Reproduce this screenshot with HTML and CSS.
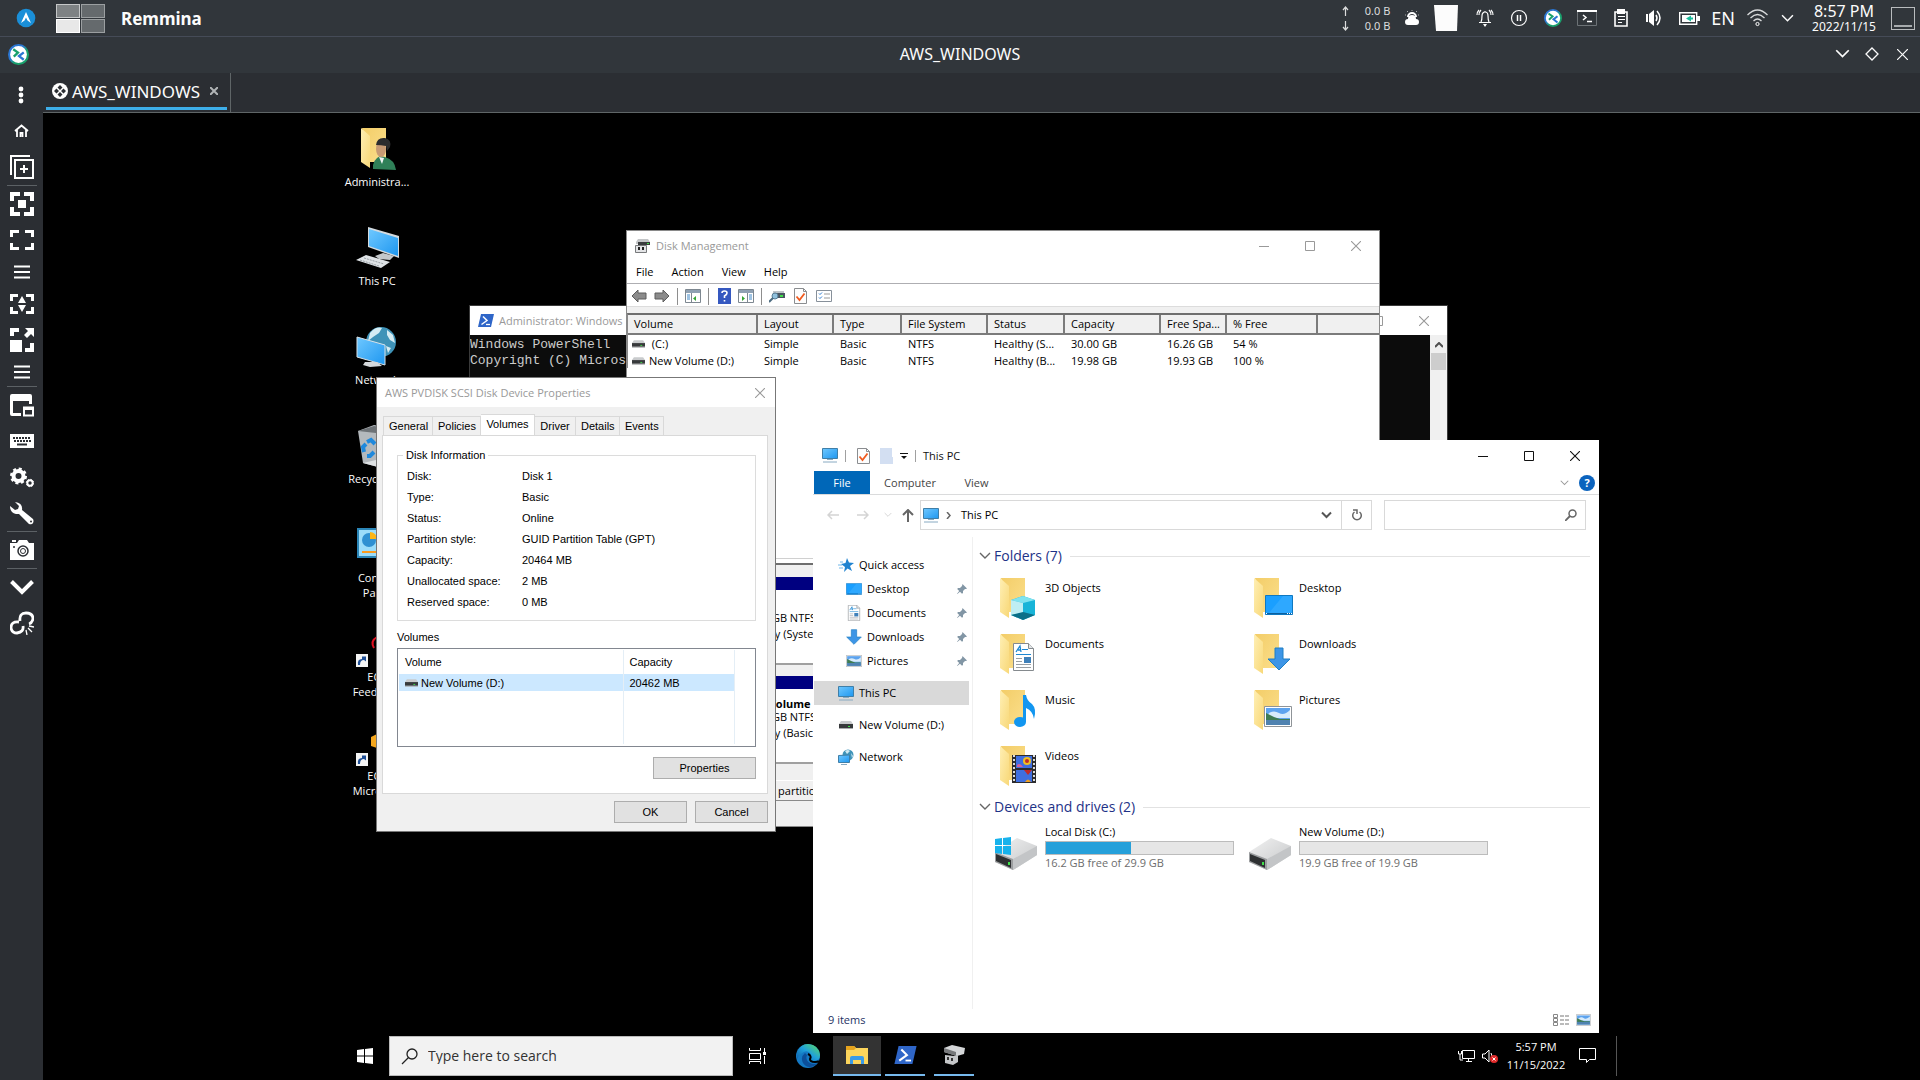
FILE: index.html
```html
<!DOCTYPE html>
<html lang="en">
<head>
<meta charset="utf-8">
<title>AWS_WINDOWS - Remmina</title>
<link rel="stylesheet" href="styles.css">
</head>
<body>
<svg class="defs" width="0" height="0" aria-hidden="true">
  <defs>
    <linearGradient id="g-fold" x1="0" y1="0" x2="1" y2="1"><stop offset="0" stop-color="#f3cd68"/><stop offset="1" stop-color="#fbdf8c"/></linearGradient>
    <linearGradient id="g-flap" x1="0" y1="0" x2="1" y2="1"><stop offset="0" stop-color="#ffefb4"/><stop offset="1" stop-color="#f8d878"/></linearGradient>
    <linearGradient id="g-scr" x1="0" y1="0" x2="1" y2="1"><stop offset="0" stop-color="#6fc8ff"/><stop offset="1" stop-color="#1e97f0"/></linearGradient>
    <linearGradient id="g-drv" x1="0" y1="0" x2="1" y2="1"><stop offset="0" stop-color="#f2f2f2"/><stop offset="1" stop-color="#c4c6c8"/></linearGradient>
    <linearGradient id="g-edge" x1="0" y1="1" x2="1" y2="0"><stop offset="0" stop-color="#0c59a4"/><stop offset=".5" stop-color="#1fa0dc"/><stop offset="1" stop-color="#5fe05a"/></linearGradient>
    <linearGradient id="g-rem" x1="0" y1="0" x2="1" y2="1"><stop offset=".4" stop-color="#2a76d2"/><stop offset=".6" stop-color="#18a06c"/></linearGradient>
  </defs>
  <symbol id="folder" viewBox="0 0 25 41"><path d="M1 0h24v34H8z" fill="url(#g-fold)"/><path d="M0 0l9 8v32L0 34z" fill="url(#g-flap)"/></symbol>
  <symbol id="pc" viewBox="0 0 16 15"><path d="M.5.5h15v10H.5z" fill="url(#g-scr)" stroke="#3f7fa8"/><path d="M5 11.500h6M1 14h14" stroke="#88aac2"/></symbol>
  <symbol id="drive-s" viewBox="0 0 14 8"><path d="M2 0h10l2 3H0z" fill="#c9cbcd"/><path d="M0 3h14v4H0z" fill="#37393b"/><path d="M0 7h14v1H0z" fill="#a9abad"/><path d="M9 5h2v1H9z" fill="#3fe04a"/></symbol>
  <symbol id="drive" viewBox="0 0 42 33"><path d="M0 15L22 1l20 8v9L18 33 0 25z" fill="url(#g-drv)"/><path d="M0 15l18 7v11L0 25z" fill="#9c9ea0"/><path d="M18 22L42 9v9L18 33z" fill="#c3c5c7"/><path d="M1 17l15 6v8L1 24z" fill="#2e3032"/><path d="M13 25h2v3h-2z" fill="#3fe04a"/></symbol>
  <symbol id="ps" viewBox="0 0 16 13"><path d="M3 0h13l-3 13H0z" fill="#2f66c8"/><path d="M5 2.500l4 4-5.500 4" fill="none" stroke="#fff" stroke-width="1.500"/><path d="M8 10.500h4" stroke="#fff" stroke-width="1.300"/></symbol>
  <symbol id="check" viewBox="0 0 13 16"><path d="M.5.5h9l3 3v12H.5z" fill="#fdfdfd" stroke="#8a8d90"/><path d="M9.500.5v3h3" fill="none" stroke="#8a8d90"/><path d="M2.500 8.500l3 3.500 5-6.500" fill="none" stroke="#f05a1e" stroke-width="1.800"/></symbol>
  <symbol id="pin" viewBox="0 0 10 10"><path d="M5.500 0L10 4.500l-1 .5-1 0-2 2 0 2-1 .8-2-2L.3 10 0 9.700 2.200 7 .2 5 1 4h2l2-2z" fill="#8296a5"/></symbol>
  <symbol id="rem" viewBox="0 0 20 20"><circle cx="10" cy="10" r="9" fill="#fff" stroke="url(#g-rem)" stroke-width="2"/><path d="M5 5l4.500 3.200L5.500 12" fill="none" stroke="#18a06c" stroke-width="2.200"/><path d="M15 8l-4.500 3.500L15 15" fill="none" stroke="#2a76d2" stroke-width="2.200"/></symbol>
  <symbol id="min" viewBox="0 0 10 10"><path d="M0 5.500h10" stroke="currentColor"/></symbol>
  <symbol id="max" viewBox="0 0 10 10"><path d="M.5.5h9v9h-9z" fill="none" stroke="currentColor"/></symbol>
  <symbol id="close" viewBox="0 0 10 10"><path d="M0 0l10 10M10 0L0 10" stroke="currentColor" stroke-width="1.100"/></symbol>
  <symbol id="chev" viewBox="0 0 12 8"><path d="M1 1l5 5 5-5" fill="none" stroke="currentColor" stroke-width="1.400"/></symbol>
  <symbol id="photo" viewBox="0 0 28 21"><path d="M.5.5h27v20H.5z" fill="#fff" stroke="#8f9498"/><path d="M2 2h24v17H2z" fill="#5da3ee"/><path d="M5 7q5-3 10 0t11-3v8H2z" fill="#d7ebfb"/><path d="M2 7l8 4 6 2h10v1H2z" fill="#3f7c52"/><path d="M2 14h24v5H2z" fill="#4f82b0"/></symbol>
  <symbol id="doc" viewBox="0 0 21 28"><path d="M.5.5h15l5 5v22H.5z" fill="#fff" stroke="#858a8e"/><path d="M15.500.5v5h5" fill="#e3e6e8" stroke="#858a8e"/><path d="M3 9l4-6 1 6M5 7h3" fill="none" stroke="#1d87d2" stroke-width="1.300"/><path d="M9 6.500h6M3 11.500h15" stroke="#1d87d2"/><path d="M3 15.500h6M3 18.500h6M3 21.500h15M3 24.500h15" stroke="#9a9fa3"/><path d="M11 14h7v6h-7z" fill="#3f80b9"/></symbol>
  <symbol id="down" viewBox="0 0 24 24"><path d="M8 1h8v11h7L12 23 1 12h7z" fill="#3d95e6" stroke="#1f7fc4"/></symbol>
  <symbol id="screen" viewBox="0 0 28 20"><path d="M.5.5h27v19H.5z" fill="#1a9fff" stroke="#0f78c0"/><path d="M18 1h9v17H4z" fill="#37acff" opacity=".7"/><path d="M1 18.500h26" stroke="#0b5f9e"/><path d="M22 18.500h5M1 18.500h1" stroke="#fff" stroke-dasharray="1 1"/></symbol>
  <symbol id="globe-pc" viewBox="0 0 42 42"><circle cx="25" cy="16" r="15" fill="#3f93b8"/><path d="M14 7q6-7 12-5l-3 5-6 4-5 4zM31 4l6 5 2 8-5-3-3-5zM30 20l5 2-3 5z" fill="#d5ecf3"/><path d="M1 11l28 8v20L1 31z" fill="url(#g-scr)" stroke="#d9e2e8"/><path d="M9 36l12 0 5 4-12 1-7-2z" fill="#d5d9dc"/></symbol>
  <symbol id="net-s" viewBox="0 0 16 16"><circle cx="10" cy="6" r="5.500" fill="#3f93b8"/><path d="M7 2q3-2 5 0L9 5zM13 4l2 3-1 2z" fill="#cfe8f1"/><path d="M.5 6.500L11.500 6v7.500H.5z" fill="url(#g-scr)" stroke="#3f7fa8"/><path d="M3 15.500h6" stroke="#88aac2"/></symbol>
  <symbol id="cap" viewBox="0 0 16 15"><path d="M3 1h10l2 3v2H1V4z" fill="#c3c5c7"/><path d="M3 4h12v3H3z" fill="#3a3c3e"/><path d="M.5 7.500h11v7H.5z" fill="#e3e4e6" stroke="#77797b"/><path d="M3 9h2v3H3zM7 9h2v3H7z" fill="#222"/><path d="M12 5h2v1h-2z" fill="#3fe04a"/></symbol>
  <symbol id="shortcut" viewBox="0 0 13 13"><path d="M0 0h13v13H0z" fill="#f4f4f4"/><path d="M3 11q-1-6 4-6V2.500h4v5L9 6q-4 0-4 5z" fill="#1f4f96"/></symbol>
</svg>

<header class="panel">
  <button class="bare logo" aria-label="Application launcher"><svg width="20" height="20" viewBox="0 0 20 20"><circle cx="10" cy="10" r="9.300" fill="#1a8fd8"/><path d="M10 4l5 11-3.500-2.500L10 9.500l-1.500 3L5 15z" fill="#fff"/></svg></button>
  <div class="pager"><span class="on1"></span><span></span><span class="current"></span><span></span></div>
  <strong class="app">Remmina</strong>
  <div class="tray">
    <div class="net"><svg width="7" height="10" viewBox="0 0 7 10"><path d="M3.500 10V1M1 4l2.500-3L6 4" fill="none" stroke="#dcdddd" stroke-width="1.200"/></svg><span>0.0 B</span><svg width="7" height="10" viewBox="0 0 7 10"><path d="M3.500 0v9M1 6l2.500 3L6 6" fill="none" stroke="#dcdddd" stroke-width="1.200"/></svg><span>0.0 B</span></div>
    <svg class="t1" width="14" height="16" viewBox="0 0 14 16"><path d="M3 15a3 3 0 0 1 0-6 4 4 0 0 1 8 0 3 3 0 0 1 0 6z" fill="#fff"/><path d="M3 7a4 4 0 0 1 8 0" fill="none" stroke="#fff" stroke-width="2"/><path d="M7 0v1M2 1l1 1M12 1l-1 1M0 5h1M13 5h1" stroke="#aaa"/></svg>
    <svg class="t2" width="24" height="26" viewBox="0 0 24 26"><path d="M0 0h24l-1 26H2z" fill="#fcfcfc"/></svg>
    <svg class="t3" width="18" height="18" viewBox="0 0 18 18"><path d="M3 13.500h12M5 13q1-2 1-6a3 4 0 0 1 6 0q0 4 1 6M9 2v1.500M3 1Q1 3 1 6M5 1Q3 3 3 6M15 1q2 2 2 5M13 1q2 2 2 5" fill="none" stroke="#fcfcfc" stroke-width="1.200"/><path d="M7 15h4l-2 3z" fill="#fff"/></svg>
    <svg class="t4" width="18" height="18" viewBox="0 0 18 18"><circle cx="9" cy="9" r="7.500" fill="none" stroke="#fcfcfc" stroke-width="1.200"/><path d="M7.500 6v6M10.500 6v6" stroke="#fff" stroke-width="1.500"/></svg>
    <svg class="t4" width="18" height="18"><use href="#rem"/></svg>
    <svg class="t5" width="20" height="16" viewBox="0 0 20 16"><path d="M0 0h20v2H0z" fill="#fff"/><path d="M.5 2v13.500h19V2" fill="none" stroke="#6c7276"/><path d="M6 5l3 2.500L6 10M10 11.500h5" fill="none" stroke="#fff" stroke-width="1.500"/></svg>
    <svg class="t6" width="14" height="18" viewBox="0 0 14 18"><path d="M1 3h12v14H1z" fill="none" stroke="#fff" stroke-width="1.600"/><path d="M3 0h8v5H3z" fill="#fff"/><path d="M4 7.500h7M4 10.500h7M4 13.500h4" stroke="#fff"/></svg>
    <svg class="t7" width="18" height="16" viewBox="0 0 18 16"><path d="M0 4h2v8H0zM3 4l5-4v16l-5-4z" fill="#fff"/><path d="M10 5q2 3 0 6M11 1q6 7 0 14" fill="none" stroke="#fff" stroke-width="1.500"/></svg>
    <svg class="t8" width="21" height="13" viewBox="0 0 21 13"><path d="M.7.7h17v11.500H.7z" fill="none" stroke="#fff" stroke-width="1.400"/><path d="M3 3h13v7H3z" fill="#fff"/><path d="M18 4h3v5h-3z" fill="#fff"/><path d="M7 6.500l5-3v6zM11 5.500h3v2h-3z" fill="#1abc9c"/></svg>
    <span class="lang">EN</span>
    <svg class="t9" width="21" height="18" viewBox="0 0 21 18"><path d="M.5 6q10-10 20 0M3.500 9q7-7 14 0M6.500 12q4-4 8 0" fill="none" stroke="#d8dadb" stroke-width="1.300"/><circle cx="10.500" cy="15" r="1.600" fill="none" stroke="#fff"/></svg>
    <svg class="t10" width="13" height="9"><use href="#chev"/></svg>
    <div class="clock"><span>8:57 PM</span><small>2022/11/15</small></div>
    <button class="bare peek" aria-label="Show desktop"><span></span></button>
  </div>
</header>

<div class="titlebar">
  <svg width="21" height="21"><use href="#rem"/></svg>
  <h1>AWS_WINDOWS</h1>
  <div class="wm">
    <button class="bare" aria-label="Minimize"><svg width="15" height="10"><use href="#chev"/></svg></button>
    <button class="bare" aria-label="Maximize"><svg width="14" height="14" viewBox="0 0 14 14"><path d="M7 1l6 6-6 6-6-6z" fill="none" stroke="currentColor" stroke-width="1.300"/></svg></button>
    <button class="bare" aria-label="Close"><svg width="11" height="11"><use href="#close"/></svg></button>
  </div>
</div>

<div class="client">
  <nav class="tools" aria-label="Connection tools">
    <button class="bare" aria-label="Menu"><svg width="24" height="24" viewBox="0 0 24 24"><g fill="#fff"><circle cx="11" cy="6" r="2.400"/><circle cx="11" cy="12" r="2.400"/><circle cx="11" cy="18" r="2.400"/></g></svg></button>
    <button class="bare" aria-label="Home"><svg width="24" height="24" viewBox="0 0 24 24"><path d="M5 12l6.500-5.500L18 12M7 11v7M16 11v7M10.500 18v-4h2v4" fill="none" stroke="#fff" stroke-width="1.800"/></svg></button>
    <button class="bare" aria-label="New connection"><svg width="24" height="24" viewBox="0 0 24 24"><path d="M1 20V1h19M5 5h18v18H5zM14 10v8M10 14h8" fill="none" stroke="#fff" stroke-width="2"/></svg></button>
    <hr>
    <button class="bare" aria-label="Fit window"><svg width="24" height="24" viewBox="0 0 24 24"><path d="M2 9V2h8M14 2h8v7M22 15v7h-8M10 22H2v-7" fill="none" stroke="#fff" stroke-width="4"/><path d="M8 8h8v8H8z" fill="#fff"/></svg></button>
    <button class="bare" aria-label="Full screen"><svg width="24" height="24" viewBox="0 0 24 24"><path d="M1.500 9V3.500H9M15 3.500h7.500V9M22.500 15v5.500H15M9 20.500H1.500V15" fill="none" stroke="#fff" stroke-width="3"/></svg></button>
    <button class="bare low" aria-label="Full screen options"><svg width="16" height="14" viewBox="0 0 16 14"><path d="M0 1.500h16M0 7h16M0 12.500h16" stroke="#fff" stroke-width="2"/></svg></button>
    <button class="bare" aria-label="Dynamic resolution"><svg width="24" height="24" viewBox="0 0 24 24"><path d="M1.500 9V3.500H8M16 3.500h6.500V9M22.500 15v5.500H16M8 20.500H1.500V15" fill="none" stroke="#fff" stroke-width="3"/><path d="M12 4l4 7H8zM12 20l4-7H8z" fill="#fff"/></svg></button>
    <button class="bare" aria-label="Scaled mode"><svg width="24" height="24" viewBox="0 0 24 24"><path d="M2 8V2h7M22 15v7h-7" fill="none" stroke="#fff" stroke-width="4"/><path d="M0 12h12v12H0zM15 0h9v9l-3-3-4 4-3-3 4-4z" fill="#fff"/></svg></button>
    <button class="bare low" aria-label="Scale options"><svg width="16" height="14" viewBox="0 0 16 14"><path d="M0 1.500h16M0 7h16M0 12.500h16" stroke="#fff" stroke-width="2"/></svg></button>
    <hr>
    <button class="bare" aria-label="Multi monitor"><svg width="24" height="24" viewBox="0 0 24 24"><path d="M0 3q0-2 2-2h18q2 0 2 2v8h-3V8H3v12h8v3H2q-2 0-2-2z" fill="#fff"/><path d="M14 14.500h9v8h-9z" fill="none" stroke="#fff" stroke-width="2"/><path d="M14 14h9v3h-9z" fill="#fff"/></svg></button>
    <button class="bare" aria-label="Grab keyboard"><svg width="24" height="24" viewBox="0 0 24 24"><path d="M0 5h24v14H0z" fill="#fff"/><path d="M3 9h18M4 12h17" stroke="#2b2e33" stroke-width="2" stroke-dasharray="2 1"/><path d="M7 15.500h10" stroke="#2b2e33" stroke-width="2"/></svg></button>
    <button class="bare" aria-label="Preferences"><svg width="24" height="24" viewBox="0 0 24 24"><circle cx="8.500" cy="11" r="5" fill="none" stroke="#fff" stroke-width="4"/><circle cx="8.500" cy="11" r="7.300" fill="none" stroke="#fff" stroke-width="2.400" stroke-dasharray="3 2.730"/><circle cx="20" cy="18" r="2.700" fill="none" stroke="#fff" stroke-width="2"/><circle cx="20" cy="18" r="3.700" fill="none" stroke="#fff" stroke-dasharray="1.500 1.400"/></svg></button>
    <button class="bare" aria-label="Tools"><svg width="24" height="24" viewBox="0 0 24 24"><path d="M5 1l4 4-1 3-3 1-5-4q0 7 6 8l3 0 10 10q3 1 4-1t0-4L12 9q1-7-7-8z" fill="#fff"/><circle cx="21" cy="20.500" r="1" fill="#2b2e33"/></svg></button>
    <hr>
    <button class="bare" aria-label="Screenshot"><svg width="24" height="24" viewBox="0 0 24 24"><path d="M0 5h7l2-3h8l2 3h5v17H0zM2 2h4v2H2z" fill="#fff"/><circle cx="13" cy="13" r="5" fill="none" stroke="#2b2e33" stroke-width="1.500"/><circle cx="13" cy="13" r="2.500" fill="none" stroke="#2b2e33"/><circle cx="4" cy="9" r="1" fill="#2b2e33"/></svg></button>
    <hr>
    <button class="bare" aria-label="Minimize window"><svg width="24" height="24" viewBox="0 0 24 24"><path d="M1.500 6.500L12 17 22.500 6.500" fill="none" stroke="#fff" stroke-width="4"/></svg></button>
    <button class="bare" aria-label="Disconnect"><svg width="24" height="24" viewBox="0 0 24 24"><path d="M10 10q-1-8 6-8 7 0 7 6-1 4-4 5M9 11q-8-1-8 6 1 5 6 5 7-1 6-7" fill="none" stroke="#fff" stroke-width="2.800"/><path d="M16 19l1 5M18 17l4 4M19 15l5 1" stroke="#fff" stroke-width="1.300"/></svg></button>
  </nav>

  <div class="session">
    <div class="tabs">
      <button class="bare tab"><svg width="16" height="16" viewBox="0 0 16 16"><circle cx="8" cy="8" r="8" fill="#fff"/><path d="M8 2l2.500 2.500L8 7 5.500 4.500zM8 9l2.500 2.500L8 14l-2.500-2.500zM2 8l2.500-2.500L7 8l-2.500 2.500zM9 8l2.500-2.500L14 8l-2.500 2.500z" fill="#2b2e33"/></svg><span>AWS_WINDOWS</span><svg class="x" width="8" height="8" viewBox="0 0 8 8"><path d="M0 0l8 8M8 0L0 8" stroke="currentColor" stroke-width="2"/></svg></button>
    </div>
    <main class="stage">
      <div class="remote">
        <ul class="shortcuts">
          <li><svg width="42" height="44" viewBox="0 0 42 44"><use href="#folder" x="5" y="0" width="25" height="41"/><path d="M17 41q-1-9 7-13l5 1q10 3 11 13z" fill="#2f8058"/><path d="M23 29l3 7 2-6z" fill="#eef4f4"/><ellipse cx="25" cy="21" rx="5" ry="8" fill="#c79a74"/><path d="M20 17q1-8 9-7 7 2 5 9l-3 4-1-5q-5-1-10-1z" fill="#2c2c2e"/></svg><span>Administra...</span></li>
          <li><svg width="44" height="44" viewBox="0 0 44 44"><path d="M13 0l31 9v22L13 20z" fill="#d4dade"/><path d="M14 2l29 9v18L14 19z" fill="url(#g-scr)"/><path d="M20 29l8-3 11 3-4 4-11-1z" fill="#c4c8cb"/><path d="M1 33l10-5 24 7-9 6z" fill="#dfe3e6"/><path d="M5 33l19 6M9 31l20 6" stroke="#9aa1a6" stroke-dasharray="2 1"/></svg><span>This PC</span></li>
          <li><svg width="42" height="44"><use href="#globe-pc" width="42" height="42"/></svg><span>Network</span></li>
          <li><svg width="38" height="44" viewBox="0 0 38 44"><path d="M0 6L16 0l22 4-4 38-14 0-15-4z" fill="#b4b9bd"/><path d="M0 6L16 1l22 3-20 4z" fill="#6d7276"/><path d="M18 35l16 4-14 3-15-4z" fill="#dfe2e4"/><path d="M9 17l4-2 4 4M16 27l-4 4h-3M6 27l-1-5 3-3" fill="none" stroke="#2089dc" stroke-width="4"/></svg><span>Recycle Bin</span></li>
          <li><svg width="40" height="44" viewBox="0 0 40 44"><path d="M1 5h38v28H1z" fill="#9bdcfa" stroke="#2b86b8" stroke-width="2"/><circle cx="12" cy="16" r="7" fill="#2f90d2"/><path d="M13 15V8a7 7 0 0 1 7 7z" fill="#fdb515"/><path d="M5 28h16" stroke="#fb9a1c" stroke-width="2"/></svg><span>Control Panel</span></li>
          <li><svg width="42" height="44" viewBox="0 0 42 44"><path d="M21 14q-7 4-3 11" fill="none" stroke="#e01020" stroke-width="2"/><use href="#shortcut" x="-1" y="31" width="13" height="13"/></svg><span>EC2 Feedback</span></li>
          <li><svg width="42" height="44" viewBox="0 0 42 44"><path d="M15 15l8-4 8 3v12l-10 0-6-2z" fill="#f5a71e"/><use href="#shortcut" x="-1" y="31" width="13" height="13"/></svg><span>EC2 Microsoft</span></li>
        </ul>

        <section class="win ps" aria-label="Windows PowerShell">
          <div class="bar"><svg width="16" height="13"><use href="#ps"/></svg><span>Administrator: Windows</span>
            <div class="ctl"><button class="bare" aria-label="Minimize"><svg width="10" height="10"><use href="#min"/></svg></button><button class="bare" aria-label="Maximize"><svg width="10" height="10"><use href="#max"/></svg></button><button class="bare" aria-label="Close"><svg width="10" height="10"><use href="#close"/></svg></button></div>
          </div>
          <div class="console"><pre>Windows PowerShell
Copyright (C) Micros</pre><div class="scroll"><svg width="8" height="6" viewBox="0 0 8 6"><path d="M0 5l4-4 4 4" fill="none" stroke="#505050" stroke-width="2"/></svg><i></i></div></div>
        </section>

        <section class="win disk" aria-label="Disk Management">
          <div class="bar"><svg width="16" height="15"><use href="#cap"/></svg><span>Disk Management</span>
            <div class="ctl"><button class="bare" aria-label="Minimize"><svg width="10" height="10"><use href="#min"/></svg></button><button class="bare" aria-label="Maximize"><svg width="10" height="10"><use href="#max"/></svg></button><button class="bare" aria-label="Close"><svg width="10" height="10"><use href="#close"/></svg></button></div>
          </div>
          <div class="menu"><button class="bare">File</button><button class="bare">Action</button><button class="bare">View</button><button class="bare">Help</button></div>
          <div class="icons">
            <button class="bare" aria-label="Back"><svg width="16" height="14" viewBox="0 0 16 14"><path d="M1 7l6-6v3h8v6H7v3z" fill="#8b8b8b" stroke="#5c5c5c"/></svg></button>
            <button class="bare" aria-label="Forward"><svg width="16" height="14" viewBox="0 0 16 14"><path d="M15 7L9 1v3H1v6h8v3z" fill="#8b8b8b" stroke="#5c5c5c"/></svg></button>
            <i></i>
            <button class="bare" aria-label="Show console tree"><svg width="16" height="14" viewBox="0 0 16 14"><path d="M.5.5h15v13H.5z" fill="#fff" stroke="#7d8790"/><path d="M1 1h14v3H1z" fill="#8fa1b3"/><path d="M6.500 4v9" stroke="#7d8790"/><path d="M2 6h3M2 8h3M2 10h3" stroke="#3f88c8"/><path d="M11 7v5L8 9.500z" fill="#35a535"/></svg></button>
            <i></i>
            <button class="bare" aria-label="Help"><svg width="13" height="16" viewBox="0 0 13 16"><path d="M0 0h13v16H0z" fill="#3558c0"/><path d="M4 5q0-2 2.500-2T9 5q0 1.500-2.500 3v2M6.500 12v1.500" fill="none" stroke="#fff" stroke-width="1.600"/></svg></button>
            <button class="bare" aria-label="Show action pane"><svg width="16" height="14" viewBox="0 0 16 14"><path d="M.5.5h15v13H.5z" fill="#fff" stroke="#7d8790"/><path d="M1 1h14v3H1z" fill="#8fa1b3"/><path d="M9.500 4v9" stroke="#7d8790"/><path d="M11 6h3M11 8h3M11 10h3" stroke="#3f88c8"/><path d="M4 7v5l3-2.500z" fill="#35a535"/></svg></button>
            <i></i>
            <button class="bare" aria-label="Rescan disks"><svg width="16" height="14" viewBox="0 0 16 14"><path d="M4 2h11v2H4z" fill="#bfc4c8"/><path d="M4 4h12v5H4z" fill="#4a5560"/><path d="M11 6h3v2h-3z" fill="#3fe04a"/><circle cx="6" cy="7" r="3" fill="#8fc0dc" stroke="#587d94"/><path d="M4 9l-4 4" stroke="#4c6b80" stroke-width="2"/></svg></button>
            <button class="bare" aria-label="Properties"><svg width="13" height="16"><use href="#check"/></svg></button>
            <button class="bare" aria-label="List view"><svg width="16" height="12" viewBox="0 0 16 12"><path d="M.5.5h15v11H.5z" fill="#fff" stroke="#87909a"/><path d="M3 3.500l1 1 2-2M3 7.500l1 1 2-2" fill="none" stroke="#2a7ad2"/><path d="M8 4h6M8 8h6" stroke="#999"/></svg></button>
          </div>
          <table class="vols">
            <colgroup><col class="c1"><col class="c2"><col class="c3"><col class="c4"><col class="c5"><col class="c6"><col class="c7"><col class="c8"><col></colgroup>
            <thead><tr><th>Volume</th><th>Layout</th><th>Type</th><th>File System</th><th>Status</th><th>Capacity</th><th>Free Spa...</th><th>% Free</th><th></th></tr></thead>
            <tbody>
              <tr><td><svg width="13" height="8"><use href="#drive-s"/></svg>&nbsp;(C:)</td><td>Simple</td><td>Basic</td><td>NTFS</td><td>Healthy (S...</td><td>30.00 GB</td><td>16.26 GB</td><td>54 %</td><td></td></tr>
              <tr><td><svg width="13" height="8"><use href="#drive-s"/></svg>New Volume (D:)</td><td>Simple</td><td>Basic</td><td>NTFS</td><td>Healthy (B...</td><td>19.98 GB</td><td>19.93 GB</td><td>100 %</td><td></td></tr>
            </tbody>
          </table>
          <div class="graph">
            <div class="lane"><div><b></b><span>30.00 GB NTFS</span><span>Healthy (System)</span></div></div>
            <div class="lane"><div><b>New Volume (D:)</b><span>19.98 GB NTFS</span><span>Healthy (Basic)</span></div></div>
            <p class="legend">Primary partition</p>
          </div>
        </section>

        <section class="win props" aria-label="Disk Device Properties">
          <div class="bar"><span>AWS PVDISK SCSI Disk Device Properties</span><button class="bare" aria-label="Close"><svg width="10" height="10"><use href="#close"/></svg></button></div>
          <div class="body">
            <div class="ptabs"><button>General</button><button>Policies</button><button class="on">Volumes</button><button>Driver</button><button>Details</button><button>Events</button></div>
            <div class="page">
              <fieldset><legend>Disk Information</legend>
                <dl><dt>Disk:</dt><dd>Disk 1</dd><dt>Type:</dt><dd>Basic</dd><dt>Status:</dt><dd>Online</dd><dt>Partition style:</dt><dd>GUID Partition Table (GPT)</dd><dt>Capacity:</dt><dd>20464 MB</dd><dt>Unallocated space:</dt><dd>2 MB</dd><dt>Reserved space:</dt><dd>0 MB</dd></dl>
              </fieldset>
              <p class="cap">Volumes</p>
              <div class="list"><table>
                <thead><tr><th>Volume</th><th>Capacity</th></tr></thead>
                <tbody><tr><td><svg width="13" height="8"><use href="#drive-s"/></svg>New Volume (D:)</td><td>20462 MB</td></tr><tr class="rest"><td></td><td></td></tr></tbody>
              </table></div>
              <div class="act"><button class="push wide">Properties</button></div>
            </div>
            <div class="foot"><button class="push">OK</button><button class="push">Cancel</button></div>
          </div>
        </section>

        <section class="win explorer" aria-label="This PC">
          <div class="bar">
            <svg width="16" height="15"><use href="#pc"/></svg><i></i><svg class="q1" width="13" height="16"><use href="#check"/></svg><svg class="q2" width="13" height="16" viewBox="0 0 13 16"><path d="M0 0h12v9h1v7H0z" fill="#d3dff2"/></svg><svg class="q3" width="8" height="6" viewBox="0 0 8 6"><path d="M0 .5h8" stroke="#111"/><path d="M1 3h6L4 6z" fill="#111"/></svg><i></i><span>This PC</span>
            <div class="ctl"><button class="bare" aria-label="Minimize"><svg width="10" height="10"><use href="#min"/></svg></button><button class="bare" aria-label="Maximize"><svg width="10" height="10"><use href="#max"/></svg></button><button class="bare" aria-label="Close"><svg width="10" height="10"><use href="#close"/></svg></button></div>
          </div>
          <div class="ribbon"><button class="bare file">File</button><button class="bare">Computer</button><button class="bare">View</button><svg class="fold" width="9" height="6"><use href="#chev"/></svg><button class="bare help" aria-label="Help">?</button></div>
          <div class="address">
            <button class="bare dim" aria-label="Back"><svg width="12" height="10" viewBox="0 0 12 10"><path d="M12 5H1M5 1L1 5l4 4" fill="none" stroke="currentColor" stroke-width="1.500"/></svg></button>
            <button class="bare dim" aria-label="Forward"><svg width="12" height="10" viewBox="0 0 12 10"><path d="M0 5h11M7 1l4 4-4 4" fill="none" stroke="currentColor" stroke-width="1.500"/></svg></button>
            <button class="bare dim thin" aria-label="Recent"><svg width="8" height="6"><use href="#chev"/></svg></button>
            <button class="bare up" aria-label="Up"><svg width="12" height="13" viewBox="0 0 12 13"><path d="M6 13V1M1 6l5-5 5 5" fill="none" stroke="currentColor" stroke-width="2"/></svg></button>
            <div class="path"><svg width="16" height="15"><use href="#pc"/></svg><svg class="gt" width="5" height="7" viewBox="0 0 5 7"><path d="M1 0l3 3.500L1 7" fill="none" stroke="#666" stroke-width="1.500"/></svg><span>This PC</span><button class="bare drop" aria-label="History"><svg width="11" height="8" viewBox="0 0 11 8"><path d="M1 1.500l4.500 4.500L10 1.500" fill="none" stroke="currentColor" stroke-width="2"/></svg></button><button class="bare ref" aria-label="Refresh"><svg width="12" height="12" viewBox="0 0 12 12"><path d="M8.500 3a4.300 4.300 0 1 1-5 0M2 1h4v4" fill="none" stroke="#666" stroke-width="1.500"/></svg></button></div>
            <label class="find"><input type="text" aria-label="Search This PC"><svg width="12" height="12" viewBox="0 0 12 12"><circle cx="7.500" cy="4.500" r="3.500" fill="none" stroke="#666" stroke-width="1.500"/><path d="M5 7l-5 5" stroke="#666" stroke-width="1.800"/></svg></label>
          </div>
          <div class="split">
            <nav class="tree">
              <a href="#"><svg class="i16" width="16" height="14" viewBox="0 0 16 14"><path d="M9 0l2 4.500 5 .5-4 3 2 5-4.500-2.500L6 14l1-5-4-3 4.500-1z" fill="#2083d0"/><path d="M0 7h4M1 10h4M2 4h3" stroke="#70b8ea"/></svg>Quick access</a>
              <a href="#" class="sub"><svg class="i16" width="16" height="12"><use href="#screen"/></svg>Desktop<svg class="pin" width="10" height="10"><use href="#pin"/></svg></a>
              <a href="#" class="sub"><svg class="i16" width="16" height="16"><use href="#doc"/></svg>Documents<svg class="pin" width="10" height="10"><use href="#pin"/></svg></a>
              <a href="#" class="sub"><svg class="i16" width="16" height="16"><use href="#down"/></svg>Downloads<svg class="pin" width="10" height="10"><use href="#pin"/></svg></a>
              <a href="#" class="sub"><svg class="i16" width="16" height="12"><use href="#photo"/></svg>Pictures<svg class="pin" width="10" height="10"><use href="#pin"/></svg></a>
              <a href="#" class="top on"><svg class="i16" width="16" height="15"><use href="#pc"/></svg>This PC</a>
              <a href="#" class="top"><svg class="i16" width="16" height="8"><use href="#drive-s"/></svg>New Volume (D:)</a>
              <a href="#" class="top"><svg class="i16" width="16" height="16"><use href="#net-s"/></svg>Network</a>
            </nav>
            <div class="content">
              <h2><svg width="12" height="8"><use href="#chev"/></svg>Folders (7)</h2>
              <ul class="grid">
                <li><svg width="50" height="42" viewBox="0 0 50 42"><use href="#folder" x="5" width="25" height="41"/><path d="M16 22l12-4 12 4v15l-12 5-12-5z" fill="#18b4d8"/><path d="M16 22l12-4 12 4-12 3z" fill="#7fe3ef"/><path d="M16 22l12 3v10l-12 2z" fill="#bfeef3"/><path d="M16 37l12-3 12 3-12 5z" fill="#0b6f88"/></svg><span>3D Objects</span></li>
                <li><svg width="50" height="42"><use href="#folder" x="5" width="25" height="41"/><use href="#screen" x="16" y="17" width="28" height="20"/></svg><span>Desktop</span></li>
                <li><svg width="50" height="42"><use href="#folder" x="5" width="25" height="41"/><use href="#doc" x="18" y="9" width="21" height="28"/></svg><span>Documents</span></li>
                <li><svg width="50" height="42"><use href="#folder" x="5" width="25" height="41"/><use href="#down" x="18" y="13" width="24" height="24"/></svg><span>Downloads</span></li>
                <li><svg width="50" height="42"><use href="#folder" x="5" width="25" height="41"/><ellipse cx="25" cy="32" rx="6" ry="5" fill="#1296f0"/><path d="M28 5h3q1 6 6 9 5 5 2 15-1-8-8-11v14h-3z" fill="#1296f0"/></svg><span>Music</span></li>
                <li><svg width="50" height="42"><use href="#folder" x="5" width="25" height="41"/><use href="#photo" x="15" y="16" width="28" height="21"/></svg><span>Pictures</span></li>
                <li><svg width="50" height="42"><use href="#folder" x="5" width="25" height="41"/><path d="M17 9h24v28H17z" fill="#2c2c2e"/><path d="M19 9v28M39 9v28" stroke="#ddd" stroke-width="2" stroke-dasharray="2 2"/><path d="M21 10h16v12H21zM21 24h16v12H21z" fill="#3f6fe0"/><circle cx="32" cy="15" r="4" fill="#f0c020"/><circle cx="32" cy="15" r="2" fill="#c02a2a"/><path d="M22 19q3-3 6 2h-6z" fill="#d060a0"/><path d="M29 24h8l-4 5z" fill="#c02a2a"/><path d="M30 36q3-5 6 0z" fill="#f0a020"/></svg><span>Videos</span></li>
              </ul>
              <h2 class="second"><svg width="12" height="8"><use href="#chev"/></svg>Devices and drives (2)</h2>
              <ul class="grid dev">
                <li><svg width="50" height="48" viewBox="0 0 50 48"><use href="#drive" y="13" width="42" height="33"/><path d="M0 15l7-1v7H0zM8 14l8-1v8H8zM0 22h7v8l-7-1zM8 22h8v9l-8-1z" fill="#17b2ec"/></svg><div><label for="c">Local Disk (C:)</label><progress id="c" max="189" value="86"></progress><small>16.2 GB free of 29.9 GB</small></div></li>
                <li><svg width="50" height="48" viewBox="0 0 50 48"><use href="#drive" y="13" width="42" height="33"/></svg><div><label for="d">New Volume (D:)</label><progress id="d" max="189" value="0"></progress><small>19.9 GB free of 19.9 GB</small></div></li>
              </ul>
            </div>
          </div>
          <footer><span>9 items</span><button class="bare" aria-label="Details view"><svg width="16" height="12" viewBox="0 0 16 12"><path d="M.5.5h4v3h-4zM.5 4.500h4v3h-4zM.5 8.500h4v3h-4z" fill="none" stroke="#888"/><path d="M7 2h9M7 6h9M7 10h9" stroke="#777" stroke-dasharray="4 1"/></svg></button><button class="bare" aria-label="Large icons"><svg width="15" height="12"><use href="#photo"/></svg></button></footer>
        </section>

        <footer class="taskbar">
          <button class="bare start" aria-label="Start"><svg width="16" height="16" viewBox="0 0 16 16"><path d="M0 2l7-1v6.500H0zM8 1l8-1v7.500H8zM0 8.500h7V15l-7-1zM8 8.500h8V16l-8-1z" fill="#fff"/></svg></button>
          <label class="search"><svg width="17" height="17" viewBox="0 0 17 17"><circle cx="11" cy="6" r="5" fill="none" stroke="#222" stroke-width="1.300"/><path d="M7.500 9.500L1 16" stroke="#222" stroke-width="1.300"/></svg><input type="text" placeholder="Type here to search" aria-label="Search"></label>
          <button class="bare tv" aria-label="Task view"><svg width="17" height="16" viewBox="0 0 17 16"><path d="M.5 0v2.500h11V0M.5 5.500h11v6H.5zM.5 16v-2.500h11V16M15.500 0v4M15.500 8v8" fill="none" stroke="#fff"/><path d="M14 4h3v3h-3z" fill="#fff"/></svg></button>
          <button class="bare edge" aria-label="Edge"><svg width="24" height="24" viewBox="0 0 24 24"><circle cx="12" cy="12" r="12" fill="#1479c4"/><path d="M1 9Q4 0 12 0q11 1 12 11 0 6-7 6-4-1-3-3 2-2 0-5-4-4-9 1-3 2-4 5z" fill="url(#g-edge)"/><path d="M9 9q-5 4-2 10 4 6 11 3l4-3q-4 2-8 0-5-3-3-8z" fill="#0c4f9a"/><path d="M12 10q4 2 2 5 0 3 5 3 3 0 4-1" fill="none" stroke="#000" stroke-width="2"/></svg></button>
          <button class="bare run active" aria-label="File Explorer"><svg width="22" height="18" viewBox="0 0 22 18"><path d="M0 0h8l2 2h12v16H0z" fill="#fcd55c"/><path d="M0 0h8l2 2-2 2H0z" fill="#e6a41e"/><path d="M4 18v-6q0-2 2-2h10q2 0 2 2v6h-3v-4H7v4z" fill="#3a9be8"/></svg></button>
          <button class="bare run" aria-label="PowerShell"><svg width="23" height="18"><use href="#ps"/></svg></button>
          <button class="bare run" aria-label="Disk Management"><svg width="22" height="20" viewBox="0 0 22 20"><path d="M1 3l8-3 13 3-1 6-7 2-13-4z" fill="#d4d6d8"/><path d="M1 3l12 4v4L1 7z" fill="#77797b"/><path d="M2 10l9 1 4-1v7l-5 3-8-2z" fill="#c5c7c9"/><path d="M4 12h2v3H4zM8 13h2v3H8z" fill="#333"/></svg></button>
          <div class="rtray">
            <svg width="17" height="14" viewBox="0 0 17 14"><path d="M4.500 1.500h12v8h-12zM8 12.500h6M10.500 10v2M.5 2v3h3V2M2 5v6h3" fill="none" stroke="#fff"/></svg>
            <svg width="17" height="14" viewBox="0 0 17 14"><path d="M.5 5H3l4-4v12L3 9H.5zM9 4q2 3 0 6" fill="none" stroke="#fff"/><circle cx="12" cy="10" r="4" fill="#e02a2a"/><path d="M10.500 8.500l3 3M13.500 8.500l-3 3" stroke="#fff"/></svg>
            <div class="rclock"><span>5:57 PM</span><span>11/15/2022</span></div>
            <button class="bare" aria-label="Notifications"><svg width="17" height="16" viewBox="0 0 17 16"><path d="M.5.5h16v11h-6l-3 3v-3h-7z" fill="none" stroke="#fff"/></svg></button>
          </div>
        </footer>
      </div>
    </main>
  </div>
</div>
</body>
</html>
```
FILE: styles.css
```css
* { box-sizing: border-box; }
body { margin: 0; min-height: 100vh; display: flex; flex-direction: column; background: #000; color: #fcfcfc; font-family: "Noto Sans", "Open Sans", sans-serif; font-size: 16px; overflow: hidden; }
.defs { position: absolute; }
svg { display: block; flex: none; }
ul, dl, dd, p, h1, h2, pre { margin: 0; padding: 0; list-style: none; }
.bare { margin: 0; padding: 0; border: 0; background: none; color: inherit; font: inherit; display: flex; align-items: center; justify-content: center; }

/* host panel */
.panel { height: 37px; display: flex; align-items: center; background: #31363b; border-bottom: 1px solid #454b57; padding-left: 16px; }
.pager { display: grid; grid-template-columns: 24px 24px; grid-template-rows: 14px 14px; gap: 1px; margin-left: 20px; }
.pager span { background: #656a6d; border: 1px solid #9b9fa1; }
.pager .on1 { background: #7e8284; border-color: #c5c7c8; }
.pager .current { background: #e8e8e8; border-color: #fff; }
.app { margin-left: 16px; font-size: 17px; line-height: 24px; padding-top: 1px; }
.tray { margin-left: auto; display: flex; align-items: center; padding-right: 5px; }
.net { display: grid; grid-template-columns: 15px 33px; align-items: center; font-size: 11px; line-height: 15px; color: #dcdddd; }
.net span { text-align: right; }
.t1 { margin-left: 15px; }
.t2 { margin-left: 15px; }
.t3 { margin-left: 18px; }
.t4 { margin-left: 16px; }
.t5 { margin-left: 15px; }
.t6 { margin-left: 17px; }
.t7 { margin-left: 18px; }
.t8 { margin-left: 15px; }
.lang { margin-left: 11px; font-size: 18px; }
.t9 { margin-left: 12px; }
.t10 { margin-left: 13px; }
.clock { width: 70px; margin: 0 12px 0 15px; text-align: center; line-height: 15px; }
.clock span, .clock small { display: block; }
.clock span { line-height: 18px; }
.clock small { font-size: 12px; line-height: 14px; }
.peek { width: 24px; height: 23px; border: 1px solid #b9bcbe; align-items: flex-end; padding-bottom: 2px; }
.peek span { width: 18px; height: 2px; background: #a7abad; }

.titlebar { height: 36px; display: grid; grid-template-columns: 100px 1fr 100px; align-items: center; background: #31363b; padding: 0 8px 2px; }
.titlebar h1 { font-size: 16px; line-height: 22px; font-weight: 400; text-align: center; }
.wm { display: flex; justify-content: flex-end; }
.wm .bare { width: 30px; }
.wm .bare:last-child { width: 20px; margin-left: 5px; }

.client { flex: 1; display: flex; background: #2b2e33; }
.tools { width: 43px; padding-top: 4px; display: flex; flex-direction: column; align-items: center; }
.tools .bare { width: 43px; height: 36px; }
.tools .low { height: 28px; }
.tools hr { width: 30px; height: 1px; margin: 0; border: 0; background: #5c6165; }
.session { flex: 1; display: flex; flex-direction: column; }
.tabs { height: 40px; border-bottom: 1px solid #5f6567; padding-left: 3px; display: flex; }
.tab { border-right: 1px solid #5f6567; padding: 0 12px 3px 6px; gap: 4px; position: relative; font-size: 17px; }
.tab::after { content: ""; position: absolute; left: 0; right: 3px; bottom: 2px; height: 3px; background: #3daee9; }
.tab .x { margin-left: 6px; color: #b0b3b5; }
.stage { flex: 1; background: #000; display: flex; flex-direction: column; align-items: center; }

/* remote desktop */
.remote { position: relative; flex: 1; width: 100%; max-width: 1279px; display: flex; flex-direction: column; justify-content: space-between; padding: 11px 0 4px; font: 11px/16px "Open Sans", "Noto Sans", sans-serif; }
.shortcuts { width: 70px; }
.shortcuts li { height: 99px; padding-top: 4px; display: flex; flex-direction: column; align-items: center; gap: 2px; line-height: 15px; text-align: center; }
.shortcuts span { width: 66px; }
.shortcuts li:first-child span { width: auto; }

.win { position: absolute; color: #000; background: #fff; display: flex; flex-direction: column; overflow: hidden; }
.bar { flex: none; height: 30px; display: flex; align-items: center; padding-left: 8px; gap: 5px; color: #999; white-space: nowrap; }
.ctl { margin-left: auto; display: flex; }
.ctl .bare { width: 46px; height: 30px; }

.ps { left: 127px; top: 192px; width: 979px; height: 470px; border: 1px solid #3a3a3a; }
.ps .bar { height: 29px; }
.console { flex: 1; display: flex; justify-content: space-between; background: #0c0c0c; color: #ccc; }
.console pre { padding-top: 2px; font: 13px/16px "Liberation Mono", monospace; }
.scroll { width: 17px; background: #f0f0f0; display: flex; flex-direction: column; align-items: center; padding-top: 7px; gap: 5px; }
.scroll i { width: 15px; height: 17px; background: #cdcdcd; }

.disk { left: 284px; top: 117px; width: 754px; height: 597px; border: 1px solid #8a8a8a; background: #f0f0f0; }
.disk .bar, .disk .menu, .disk .icons { background: #fff; }
.disk .bar { height: 29px; }
.menu { height: 24px; display: flex; padding-left: 9px; gap: 18px; border-bottom: 1px solid #aeaeb2; }
.icons { height: 23px; display: flex; align-items: center; padding: 2px 0 0 4px; gap: 7px; border-bottom: 1px solid #dcdcdc; }
.icons i { width: 1px; height: 17px; background: #8e8e8e; margin: 0; }
.icons .bare:nth-of-type(4) { margin-left: 2px; }
.icons .bare:nth-of-type(7), .icons .bare:nth-of-type(8) { margin-left: 2px; }
.vols { flex: none; margin-top: 6px; width: 100%; table-layout: fixed; border-collapse: separate; border-spacing: 0; border-top: 2px solid #6e6e6e; border-left: 1px solid #8a8a8a; background: #fff; white-space: nowrap; }
.vols th { height: 20px; padding: 0 0 0 6px; text-align: left; font-weight: 400; background: #f0f0f0; border-right: 2px solid #7b7b7b; border-bottom: 2px solid #7b7b7b; }
.vols th:last-child { border-right: 0; }
.vols td { height: 17px; padding: 0 0 0 6px; }
.vols td:first-child { padding-left: 4px; }
.vols td svg { display: inline-block; margin-right: 4px; }
.c1 { width: 130px; } .c2 { width: 76px; } .c3 { width: 68px; } .c4 { width: 86px; } .c5 { width: 77px; } .c6 { width: 96px; } .c7 { width: 66px; } .c8 { width: 91px; }
.disk::before { content: ""; order: 1; flex: 1; background: #fff; margin-top: -1px; }
.graph { order: 2; background: #f0f0f0; border-top: 2px solid #6e6e6e; padding-top: 12px; outline: 1px solid #d0d0d0; outline-offset: 4px; }
.lane { height: 99px; }
.lane div { height: 88px; border-top: 13px solid #000080; border-bottom: 2px solid #a0a0a0; background: #fff; padding: 6px 0 0 114px; white-space: nowrap; }
.lane b { height: 14px; line-height: 17px; }
.lane b, .lane span { display: block; }
.lane span { height: 16px; }
.legend { border-top: 1px solid #fff; border-bottom: 1px solid #8a8a8a; height: 21px; margin: 5px 0 25px; padding: 2px 0 0 108px; }

.props { left: 34px; top: 264px; width: 400px; height: 455px; border: 1px solid #777; font: 11px/14px "Liberation Sans", Arial, sans-serif; }
.props .bar { justify-content: space-between; height: 29px; padding: 0 10px 0 8px; font: 11px/16px "Open Sans", sans-serif; }
.props .body { flex: 1; background: #f0f0f0; padding: 8px 7px 0 5px; }
.ptabs { display: flex; align-items: flex-end; padding-left: 1px; height: 20px; }
.ptabs button { height: 19px; margin: 0; padding: 0 5px; border: 1px solid #d9d9d9; border-left-width: 0; border-bottom: 0; background: #f0f0f0; color: #000; font: inherit; width: 44px; white-space: nowrap; }
.ptabs button:first-child { border-left-width: 1px; width: 50px; }
.ptabs button:nth-child(2) { width: 48px; }
.ptabs .on { width: 54px; height: 21px; background: #fff; padding-bottom: 3px; }
.ptabs button:nth-child(4) { width: 41px; }
.page { background: #fff; border: 1px solid #d9d9d9; height: 359px; padding: 12px 11px 0 14px; }
fieldset { margin: 0; padding: 4px 9px 6px; height: 173px; border: 1px solid #dcdcdc; }
legend { margin-left: -4px; padding: 0 3px; }
dl { display: grid; grid-template-columns: 115px 1fr; line-height: 21px; }
.cap { margin-top: 9px; }
.list { margin-top: 4px; height: 99px; border: 1px solid #828790; padding: 1px; }
.list table { width: 336px; height: 94px; border-collapse: collapse; table-layout: fixed; }
.list th, .list td { text-align: left; font-weight: 400; padding: 0 6px; border-right: 1px solid #e4eef6; }
.list th:first-child { width: 224px; }
.list th { height: 24px; padding-top: 0; }
.list tbody td { height: 17px; background: #cce8ff; }
.list .rest td { height: auto; background: none; }
.list svg { display: inline-block; margin-right: 3px; }
.act, .foot { display: flex; justify-content: flex-end; }
.act { margin-top: 10px; }
.foot { margin-top: 7px; gap: 8px; }
.push { width: 73px; height: 22px; padding: 0; background: #e1e1e1; border: 1px solid #adadad; color: #000; font: inherit; }
.push.wide { width: 103px; }

.explorer { left: 471px; top: 327px; width: 786px; height: 593px; }
.explorer .bar { color: #111; padding: 0 1px 0 9px; height: 31px; gap: 0; }
.explorer .bar i { width: 1px; height: 12px; margin: 0 7px; background: #a0a0a0; }
.q1 { margin-left: 4px; }
.q2 { margin-left: 10px; }
.q3 { margin-left: 7px; }
.ribbon { height: 24px; display: flex; align-items: stretch; border-bottom: 1px solid #dadbdc; color: #444; padding: 0 4px 0 1px; }
.ribbon .bare { width: 80px; }
.ribbon .bare:nth-child(3) { width: 53px; }
.ribbon .file { width: 56px; background: #0067b8; color: #fff; }
.fold { margin: 9px 10px 0 auto; color: #999; }
.ribbon .help { width: 16px; height: 16px; align-self: center; border-radius: 8px; background: #0b63be; color: #fff; font-weight: 700; }
.address { height: 42px; display: flex; align-items: center; padding: 0 13px 2px 5px; }
.address .dim { width: 30px; color: #d4d4d4; }
.address .thin { width: 20px; }
.address .up { width: 20px; margin-right: 2px; color: #666; }
.path { flex: 1; height: 30px; border: 1px solid #d9d9d9; display: flex; align-items: center; padding-left: 2px; color: #000; }
.gt { margin: 0 10px 0 7px; }
.drop { margin-left: auto; width: 30px; color: #555; }
.path .ref { width: 30px; height: 28px; border-left: 1px solid #d9d9d9; }
.find { width: 202px; height: 30px; margin-left: 12px; border: 1px solid #d9d9d9; display: flex; align-items: center; padding-right: 8px; }
.find input { flex: 1; min-width: 0; border: 0; background: none; font: inherit; }
.split { flex: 1; display: grid; grid-template-columns: 160px 1fr; }
.tree { padding: 16px 3px 0 1px; border-right: 1px solid #f0f0f0; display: flex; flex-direction: column; }
.tree a { height: 24px; display: flex; align-items: center; gap: 5px; padding: 0 2px 0 24px; color: #000; text-decoration: none; white-space: nowrap; }
.tree .sub { padding-left: 32px; }
.tree .top { margin-top: 8px; }
.tree .on { background: #d9d9d9; }
.pin { margin-left: auto; }
.content h2 { display: flex; align-items: center; gap: 3px; height: 24px; margin-top: 7px; padding: 0 9px 0 6px; font-size: 14px; font-weight: 400; color: #1e3287; }
.content h2 svg { color: #666; }
.content h2::after { content: ""; flex: 1; height: 1px; margin-left: 5px; background: #e2e2e2; }
.content .second { margin-top: 3px; }
.grid { display: grid; grid-template-columns: 254px 254px; padding-left: 22px; }
.grid li { display: flex; height: 56px; padding-top: 10px; }
.grid li > span { margin-top: 2px; }
.grid.dev li { padding-top: 5px; height: 60px; }
.dev div { width: 189px; }
.dev label, .dev small { display: block; font-size: 11px; line-height: 16px; }
.dev small { color: #6d6d6d; }
progress { display: block; appearance: none; width: 189px; height: 14px; margin-top: 1px; border: 1px solid #bcbcbc; background: #e6e6e6; }
progress::-webkit-progress-bar { background: #e6e6e6; }
progress::-webkit-progress-value { background: #26a0da; }
.explorer footer { height: 24px; display: flex; align-items: center; gap: 7px; padding: 0 8px 2px 15px; color: #1e3264; }
.explorer footer span { margin-right: auto; }

.taskbar { height: 40px; display: flex; align-items: stretch; }
.start { width: 47px; padding-left: 15px; justify-content: flex-start; }
.search { width: 344px; background: #f2f2f2; border: 1px solid #bbb; display: flex; align-items: center; gap: 10px; padding-left: 11px; }
.search input { flex: 1; min-width: 0; border: 0; padding: 0; background: none; font: inherit; font-size: 14px; }
.search input::placeholder { color: #333; opacity: 1; }
.tv { width: 48px; }
.edge { width: 50px; margin-left: 2px; }
.run { width: 40px; margin-left: 4px; border-bottom: 2px solid #76b9ed; }
.run + .run + .run { margin-left: 9px; }
.run.active { width: 48px; margin-left: 0; background: #333; }
.rtray { margin-left: auto; display: flex; align-items: center; border-right: 1px solid #555; padding-right: 20px; margin-right: 4px; gap: 7px; }
.rclock { width: 60px; margin-right: 2px; text-align: center; }
.rclock span { display: block; line-height: 18px; }
.rtray .bare { margin-left: 4px; }
```
